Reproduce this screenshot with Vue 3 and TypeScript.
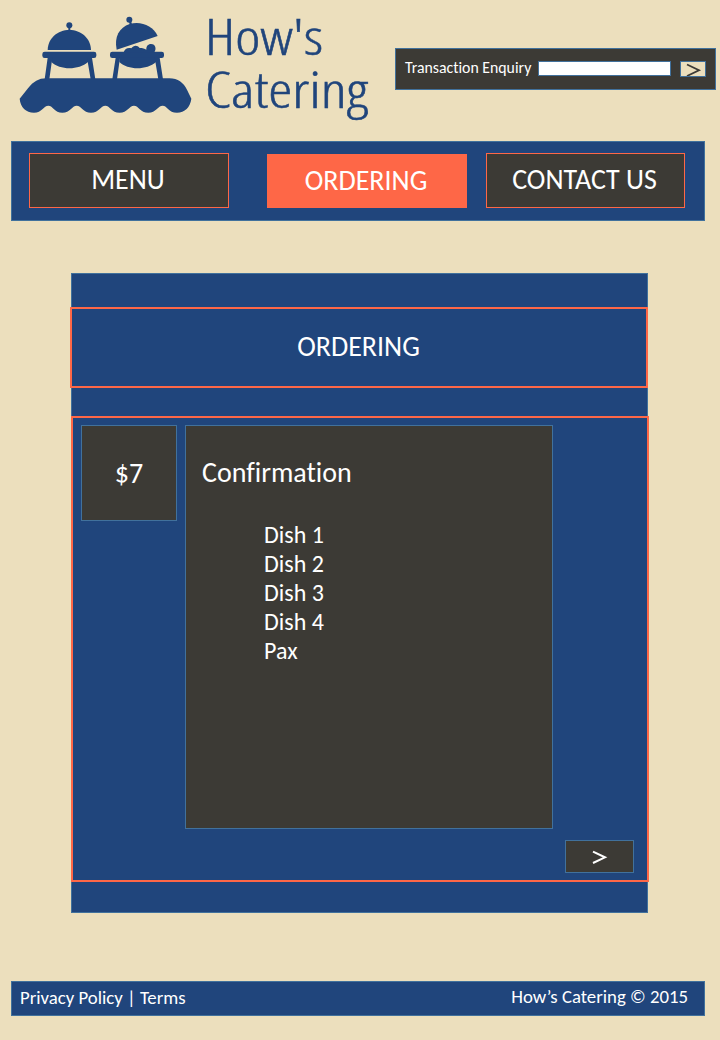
<script setup lang="ts">
interface NavItem {
  label: string
  kind: string
}

const navItems: NavItem[] = [
  { label: 'MENU', kind: 'menu' },
  { label: 'ORDERING', kind: 'active' },
  { label: 'CONTACT US', kind: 'contact' },
]

const lines: string[] = ['Dish 1', 'Dish 2', 'Dish 3', 'Dish 4', 'Pax']
</script>

<template>
  <div class="page">
    <header class="header">
      <svg class="logo" width="385" height="130" viewBox="0 0 385 130" role="img" aria-label="How's Catering">
        <g transform="translate(10 5) scale(0.33333)" fill="#20457c">
          <circle cx="178" cy="61" r="9" />
          <rect x="175" y="66" width="6" height="12" />
          <path d="M113 135C114 99 143 75 178 75S242 99 243 135Z" />
          <rect x="97" y="140" width="162" height="19" rx="7" />
          <path d="M124 158H234V171C206 196 150 196 124 171Z" />
          <path d="M113 158H127L118 223H104ZM231 158H246L256 223H242Z" />
          <circle cx="358" cy="44" r="9" />
          <path d="M357 50L363 48L367 61L360 63Z" />
          <path d="M320 134C312 96 328 67 359 57C392 47 429 62 443 93Z" />
          <rect x="300" y="140" width="162" height="19" rx="7" />
          <path d="M341 142C344 130 355 127 364 130C371 120 382 120 389 129C398 129 404 131 409 134C408 124 414 117 423 117C437 117 440 132 433 142Z" />
          <path d="M328 158H438V171C410 196 354 196 328 171Z" />
          <path d="M317 158H330L321 223H307ZM434 158H449L459 223H445Z" />
          <path d="M109 220H478C504 220 520 233 531 254L544 281C541 307 524 323 501 323C475 323 472 302 458 302C444 302 438 323 415 323C390 323 386 302 372 302C358 302 352 323 329 323C304 323 300 302 286 302C272 302 267 323 243 323C219 323 214 302 200 302C186 302 181 323 157 323C133 323 129 302 115 302C101 302 96 323 72 323C48 323 31 307 29 281L54 250C70 230 86 220 109 220Z" />
        </g>
        <text class="logo-text" x="205" y="55" textLength="118" lengthAdjust="spacingAndGlyphs">How's</text>
        <text class="logo-text" x="205" y="108" textLength="163" lengthAdjust="spacingAndGlyphs">Catering</text>
      </svg>
      <form class="enquiry" @submit.prevent>
        <label class="enquiry-label" for="enquiry">Transaction Enquiry</label>
        <input id="enquiry" class="enquiry-input" type="text" />
        <button class="enquiry-go" aria-label="Search">
          <svg width="24" height="14" viewBox="0 0 24 14"><path d="M6 2.5L18 8.2L6 14" fill="none" stroke="#3c3a35" stroke-width="1.8" /></svg>
        </button>
      </form>
    </header>

    <nav class="nav">
      <a v-for="item in navItems" :key="item.label" class="nav-item" :class="item.kind"><span>{{ item.label }}</span></a>
    </nav>

    <main class="main">
      <h1 class="title"><span>ORDERING</span></h1>
      <section class="content">
        <div class="price"><span>$7</span></div>
        <div class="card">
          <h2 class="card-title"><span>Confirmation</span></h2>
          <ul class="list">
            <li v-for="line in lines" :key="line"><span>{{ line }}</span></li>
          </ul>
        </div>
        <button class="next" aria-label="Next">
          <svg width="67" height="31" viewBox="0 0 67 31"><path d="M27 10.7L39 16.3L27 22" fill="none" stroke="#fff" stroke-width="2" /></svg>
        </button>
      </section>
    </main>

    <footer class="footer">
      <span class="links">Privacy Policy | Terms</span>
      <span class="copy">How’s Catering © 2015</span>
    </footer>
  </div>
</template>

<style>
body {
  margin: 0;
  background: #ecdfbd;
}
</style>

<style scoped>
.page {
  box-sizing: border-box;
  width: 720px;
  height: 1040px;
  overflow: hidden;
  background: #ecdfbd;
  color: #fff;
  font-family: Calibri, Carlito, Lato, 'Open Sans', sans-serif;
  font-variant-ligatures: none;
}
.page * {
  box-sizing: border-box;
}
.header {
  display: flex;
  height: 141px;
}
.logo {
  flex: none;
  display: block;
}
.logo-text {
  font-family: 'Open Sans', sans-serif;
  font-weight: 300;
  font-stretch: 75%;
  font-size: 49.5px;
  fill: #20457c;
  stroke: #20457c;
  stroke-width: 0.5px;
}
.enquiry {
  display: flex;
  align-items: flex-start;
  width: 321px;
  height: 42px;
  margin: 48px 0 0 10px;
  padding: 12px 9px 0;
  background: #3c3a35;
  border: 1px solid #41719c;
}
.enquiry-label {
  width: 133px;
  margin-top: -2px;
  font-size: 15.8px;
  line-height: 18px;
  white-space: nowrap;
}
.enquiry-input {
  width: 133px;
  height: 15px;
  padding: 0;
  background: #fff;
  border: 1px solid #41719c;
}
.enquiry-go {
  display: flex;
  width: 26px;
  height: 16px;
  margin-left: 9px;
  padding: 0;
  background: #ecdfbd;
  border: 1px solid #41719c;
}
.nav {
  display: flex;
  width: 694px;
  height: 80px;
  margin-left: 11px;
  padding: 11px 0 0 17px;
  background: #20457c;
  border: 1px solid #41719c;
}
.nav-item {
  display: flex;
  align-items: center;
  justify-content: center;
  width: 200px;
  height: 55px;
  padding: 0 2px 1px 0;
  font-size: 28px;
  line-height: 34px;
  background: #3c3a35;
  border: 1px solid #fe6747;
}
.nav-item.active {
  height: 54px;
  margin: 1px 19px 0 38px;
  padding-bottom: 0;
  background: #fe6747;
}
.nav-item.contact {
  width: 199px;
}
.main {
  width: 577px;
  height: 640px;
  margin: 52px 0 0 71px;
  padding-top: 33px;
  background: #20457c;
  border: 1px solid #41719c;
}
.title {
  display: flex;
  align-items: center;
  justify-content: center;
  width: 578px;
  height: 81px;
  margin: 0 0 28px -2px;
  padding: 0 1px 1px 0;
  border: 2px solid #fe6747;
  font-size: 28px;
  line-height: 34px;
  font-weight: 400;
}
.content {
  display: grid;
  grid-template-columns: 96px 368px 69px;
  grid-template-rows: 404px 33px;
  column-gap: 8px;
  row-gap: 11px;
  width: 578px;
  height: 466px;
  margin-left: -1px;
  padding: 7px 0 0 8px;
  border: 2px solid #fe6747;
}
.price {
  display: flex;
  align-items: center;
  justify-content: center;
  height: 96px;
  padding-top: 1px;
  background: #3c3a35;
  border: 1px solid #41719c;
  font-size: 28px;
  line-height: 34px;
}
.card {
  padding: 31px 0 0 16px;
  background: #3c3a35;
  border: 1px solid #41719c;
}
.card-title {
  margin: 0;
  font-size: 28px;
  line-height: 32px;
  font-weight: 400;
}
.list {
  margin: 31px 0 0 62px;
  padding: 0;
  list-style: none;
  font-size: 24px;
  line-height: 29px;
}
.next {
  display: flex;
  grid-column: 3;
  grid-row: 2;
  margin-left: 4px;
  width: 69px;
  height: 33px;
  padding: 0;
  background: #3c3a35;
  border: 1px solid #41719c;
}
.footer {
  display: flex;
  align-items: center;
  justify-content: space-between;
  width: 694px;
  height: 35px;
  margin: 68px 0 0 11px;
  padding: 0 16px 2px 8px;
  background: #20457c;
  border: 1px solid #41719c;
  font-size: 18.8px;
}
.copy {
  margin-top: -2px;
}
</style>
